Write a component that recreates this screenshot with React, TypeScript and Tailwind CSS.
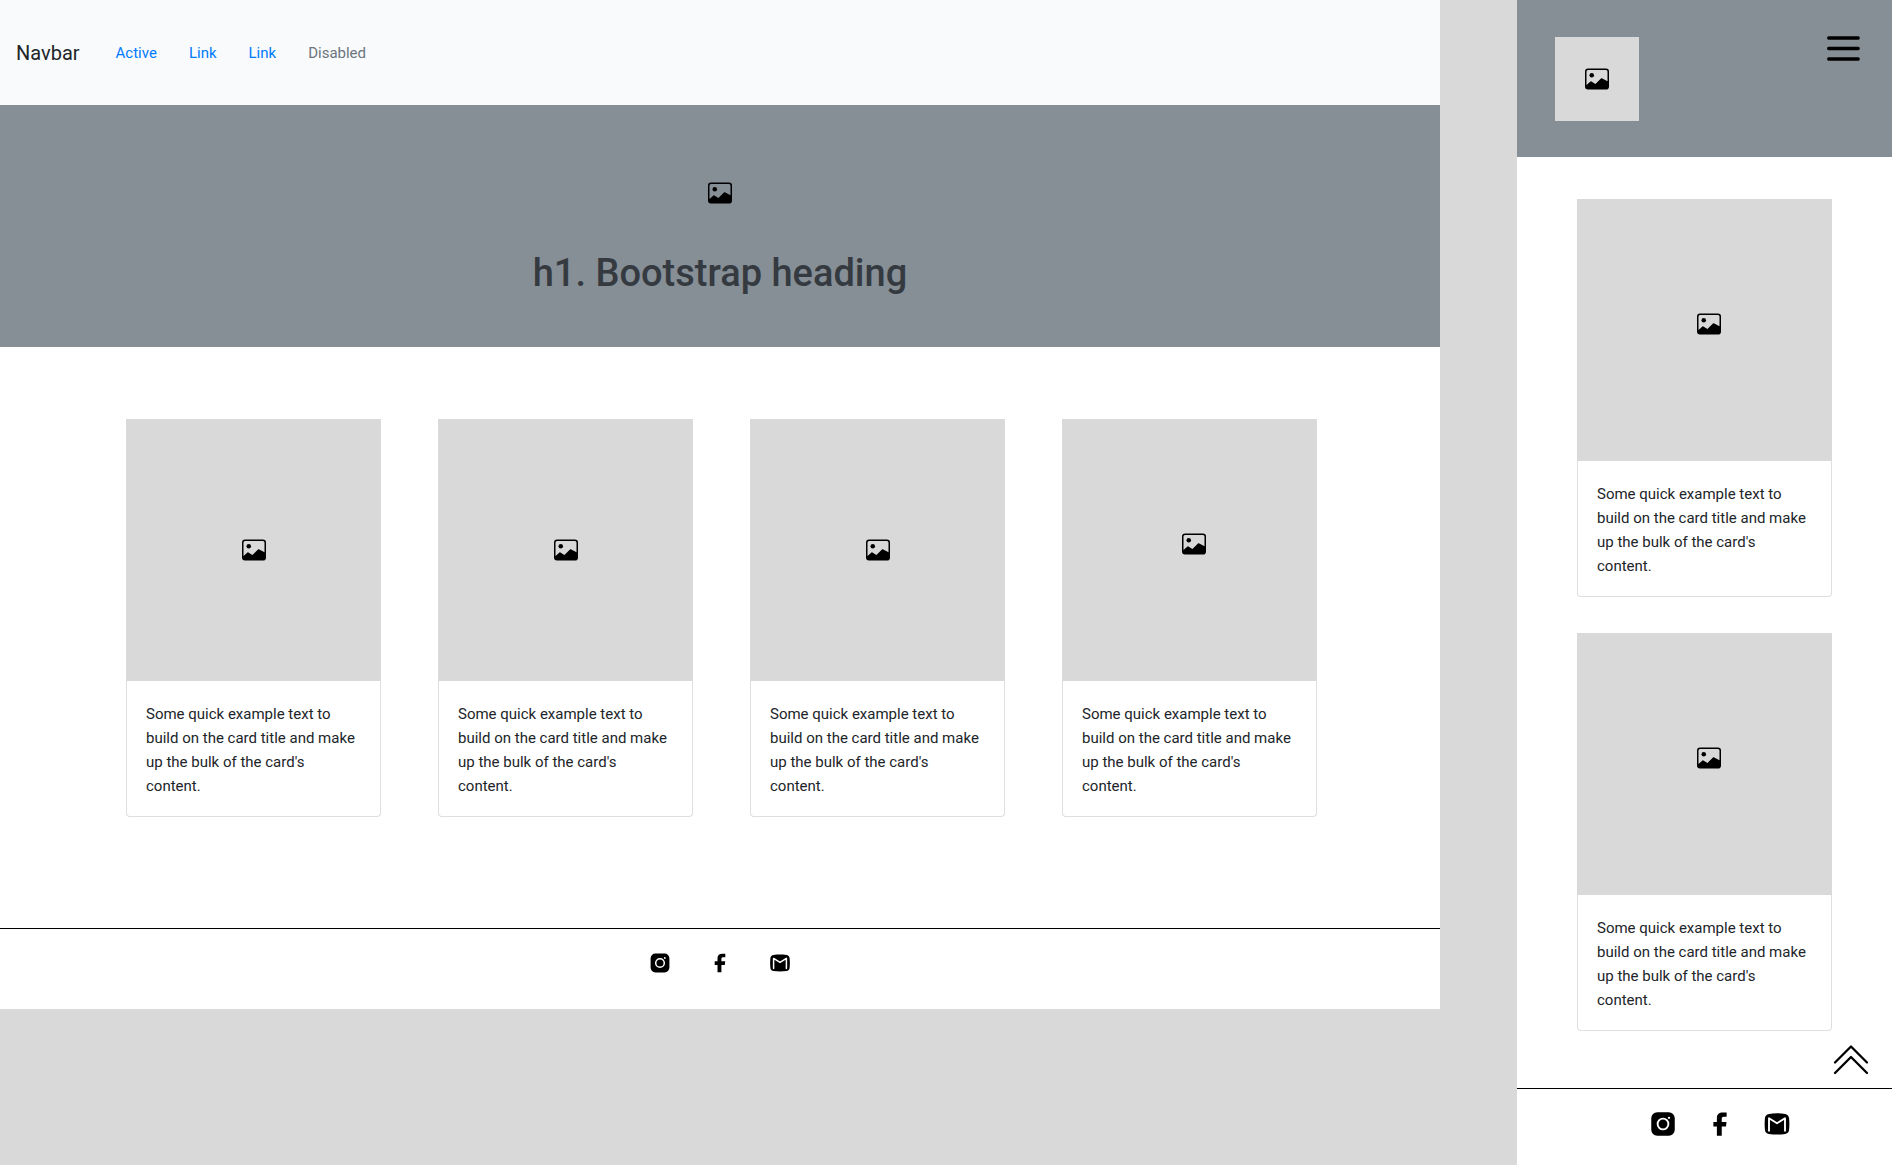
import React from "react";
import { BsImage } from "react-icons/bs";

const CARD_TEXT =
  "Some quick example text to build on the card title and make up the bulk of the card's content.";

function Card({ raised = false }: { raised?: boolean }) {
  return (
    <article>
      <div
        className={
          raised
            ? "flex h-[262px] items-center justify-center bg-[#d9d9d9] pb-3 pl-2"
            : "flex h-[262px] items-center justify-center bg-[#d9d9d9]"
        }
      >
        <BsImage className="size-6 text-black" aria-hidden="true" />
      </div>
      <div className="rounded-b border border-t-0 border-[#dfdfdf] bg-white px-[19px] pt-[21px] pb-[18px]">
        <p className="text-[15px] leading-6 text-[#212529]">{CARD_TEXT}</p>
      </div>
    </article>
  );
}

function InstagramIcon({ className }: { className: string }) {
  return (
    <svg viewBox="0 0 24 24" className={className} aria-hidden="true">
      <rect x="2.6" y="2.6" width="18.8" height="18.8" rx="4.8" fill="currentColor" />
      <circle cx="12" cy="12" r="4.3" fill="none" stroke="white" strokeWidth="1.5" />
      <circle cx="16.8" cy="7" r="0.9" fill="white" />
    </svg>
  );
}

function FacebookIcon({ className }: { className: string }) {
  return (
    <svg viewBox="0 0 24 24" className={className} aria-hidden="true">
      <path
        d="M9.5 21.3v-7.4H6.7v-3.6h2.8V7.2c0-3.1 1.9-4.5 4.7-4.5h3.1v3.5h-2.2c-1.3 0-1.7.6-1.7 1.7v2.4h3.8l-.4 3.6h-3.4v7.4Z"
        fill="currentColor"
      />
    </svg>
  );
}

function MailIcon({ className }: { className: string }) {
  return (
    <svg viewBox="0 0 24 24" className={className} aria-hidden="true">
      <path
        d="M5.5 3.900c4.300-.6 8.700-.6 13 0 1.700.2 2.900 1.400 3.100 3.100.4 3.300.4 6.700 0 10-.2 1.700-1.400 2.800-3.100 3-4.300.6-8.700.6-13 0-1.700-.2-2.900-1.300-3.100-3-.4-3.300-.4-6.700 0-10 .2-1.700 1.400-2.900 3.100-3.100Z"
        fill="currentColor"
      />
      <path
        d="M5.600 17.400V7.400l6.400 4 6.400-4v10"
        fill="none"
        stroke="white"
        strokeWidth="1.5"
        strokeLinecap="round"
        strokeLinejoin="round"
      />
    </svg>
  );
}

function DesktopPage() {
  return (
    <div className="bg-white">
      <nav className="flex h-[105px] items-center gap-9 bg-[#f8fafc] px-4">
        <a href="#home" className="text-xl text-[#212529]">
          Navbar
        </a>
        <div className="flex gap-8 text-[15px] leading-6 text-[#007bff]">
          <a href="#active" aria-current="page">
            Active
          </a>
          <a href="#first">Link</a>
          <a href="#second">Link</a>
          <a aria-disabled="true" className="text-[#6c757d]">
            Disabled
          </a>
        </div>
      </nav>
      <header className="flex h-[242px] flex-col items-center bg-[#868e96] pt-[76px]">
        <BsImage className="size-6 text-black" aria-hidden="true" />
        <h1 className="mt-11 text-[38px] leading-12 font-medium text-[#343a40]">
          h1. Bootstrap heading
        </h1>
      </header>
      <main className="grid grid-cols-4 gap-[57px] pt-[72px] pr-[123px] pb-[111px] pl-[126px]">
        <Card />
        <Card />
        <Card />
        <Card raised />
      </main>
      <footer className="flex h-[81px] justify-center gap-9 border-t border-black pt-[22px]">
        <a href="#instagram" aria-label="Instagram">
          <InstagramIcon className="size-6" />
        </a>
        <a href="#facebook" aria-label="Facebook">
          <FacebookIcon className="size-6" />
        </a>
        <a href="#mail" aria-label="Mail">
          <MailIcon className="size-6" />
        </a>
      </footer>
    </div>
  );
}

function MobilePage() {
  return (
    <div className="flex min-h-screen flex-col bg-white">
      <header className="flex h-[157px] items-start justify-between bg-[#868e96] pr-7 pl-[38px]">
        <div className="mt-[37px] flex size-[84px] items-center justify-center bg-[#d9d9d9]">
          <BsImage className="size-6 text-black" aria-hidden="true" />
        </div>
        <button type="button" aria-label="Open menu" className="mt-7">
          <svg viewBox="0 0 40 40" className="size-10" aria-hidden="true">
            <path
              d="M4.700 10h29.500M4.700 20.500h29.500M4.700 31h29.500"
              fill="none"
              stroke="black"
              strokeWidth="3.3"
              strokeLinecap="round"
            />
          </svg>
        </button>
      </header>
      <main className="flex flex-col gap-9 px-[60px] pt-[42px]">
        <Card raised />
        <Card raised />
      </main>
      <div className="flex h-[57px] items-center justify-end pr-[23px]">
        <button type="button" aria-label="Back to top">
          <svg viewBox="0 0 36 36" className="size-9" aria-hidden="true">
            <path
              d="M2 20.500 18 4.500l16 16M2 31 18 15l16 16"
              fill="none"
              stroke="black"
              strokeWidth="2.3"
              strokeLinecap="round"
              strokeLinejoin="round"
            />
          </svg>
        </button>
      </div>
      <footer className="flex grow justify-center gap-[27px] border-t border-black pt-5 pl-[30px]">
        <a href="#instagram-mobile" aria-label="Instagram">
          <InstagramIcon className="size-[30px]" />
        </a>
        <a href="#facebook-mobile" aria-label="Facebook">
          <FacebookIcon className="size-[30px]" />
        </a>
        <a href="#mail-mobile" aria-label="Mail">
          <MailIcon className="size-[30px]" />
        </a>
      </footer>
    </div>
  );
}

export default function App() {
  return (
    <div className="grid min-h-screen grid-cols-[1440fr_375fr] items-start gap-[77px] bg-[#d9d9d9] font-['Roboto',sans-serif]">
      <DesktopPage />
      <MobilePage />
    </div>
  );
}
